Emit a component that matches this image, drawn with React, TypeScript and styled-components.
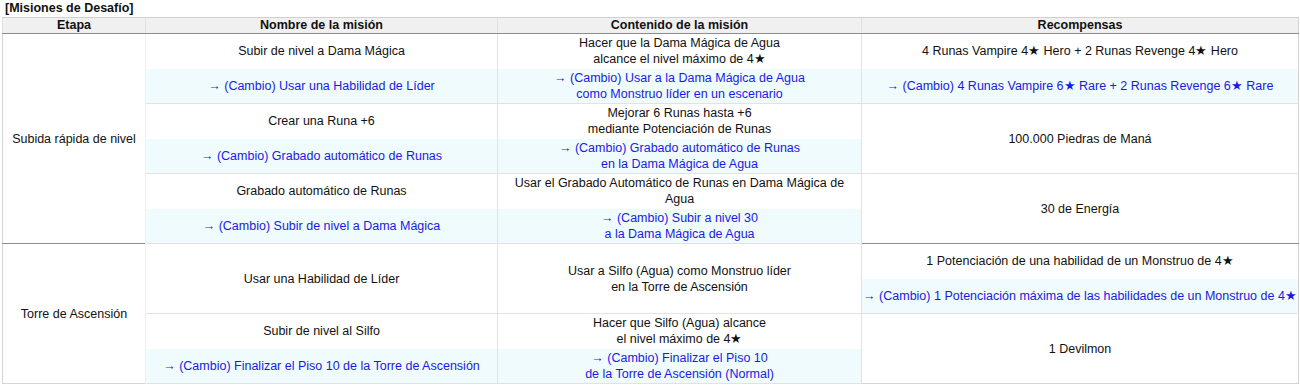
import React from "react";
import styled, { createGlobalStyle } from "styled-components";

const GlobalStyle = createGlobalStyle`
  body {
    margin: 0;
    background: #fff;
    font-family: "Liberation Sans", Arial, sans-serif;
    color: #111;
  }
`;

const Page = styled.div`
  padding: 0 3px 0 2px;
  width: 1300px;
  box-sizing: border-box;
`;

const Title = styled.div`
  font-size: 12.5px;
  font-weight: bold;
  line-height: 17px;
  padding-left: 3px;
`;

const Table = styled.table`
  width: 1296px;
  border-collapse: collapse;
  table-layout: fixed;
  font-size: 12.5px;
  border-left: 1px solid #d4d4d4;
  border-right: 1px solid #d4d4d4;
  border-bottom: 1px solid #d4d4d4;
`;

const Th = styled.th`
  background: #f0f0f0;
  font-weight: bold;
  height: 15px;
  line-height: 15px;
  padding: 0;
  border-top: 1px solid #d0d0d0;
  border-bottom: 1px solid #8c8c8c;
  border-left: 1px solid #e2e2e2;
`;

const Group = styled.tbody<{ $last?: boolean }>`
  border-bottom: ${({ $last }) => ($last ? "1px solid #d4d4d4" : "1px solid #8c8c8c")};
`;

const Cell = styled.td<{ $change?: boolean; $tight?: boolean; $ruled?: boolean }>`
  height: 35px;
  padding: 0 ${({ $tight }) => ($tight ? 0 : 2)}px;
  text-align: center;
  vertical-align: middle;
  line-height: 16px;
  white-space: ${({ $tight }) => ($tight ? "nowrap" : "normal")};
  overflow: hidden;
  color: ${({ $change }) => ($change ? "#1a1ae6" : "#111")};
  background: ${({ $change }) => ($change ? "#f0fbfd" : "#fff")};
  border-left: 1px solid #e2e2e2;
  border-bottom: ${({ $change, $ruled }) => ($change || $ruled ? "1px solid #e2e2e2" : "none")};
  box-sizing: border-box;
`;

const StageCell = styled.td`
  padding: 0 2px;
  text-align: center;
  vertical-align: middle;
  background: #fff;
  border-right: 1px solid #f0f0f0;
`;

const Arrow = "→ (Cambio) ";

export default function App() {
  return (
    <Page>
      <GlobalStyle />
      <Title>[Misiones de Desafío]</Title>
      <Table>
        <colgroup>
          <col style={{ width: 143 }} />
          <col style={{ width: 352 }} />
          <col style={{ width: 364 }} />
          <col style={{ width: 437 }} />
        </colgroup>
        <thead>
          <tr>
            <Th>Etapa</Th>
            <Th>Nombre de la misión</Th>
            <Th>Contenido de la misión</Th>
            <Th>Recompensas</Th>
          </tr>
        </thead>
        <Group>
          <tr>
            <StageCell rowSpan={6}>Subida rápida de nivel</StageCell>
            <Cell>Subir de nivel a Dama Mágica</Cell>
            <Cell>
              Hacer que la Dama Mágica de Agua
              <br />
              alcance el nivel máximo de 4★
            </Cell>
            <Cell>4 Runas Vampire 4★ Hero + 2 Runas Revenge 4★ Hero</Cell>
          </tr>
          <tr>
            <Cell $change>{Arrow}Usar una Habilidad de Líder</Cell>
            <Cell $change>
              {Arrow}Usar a la Dama Mágica de Agua
              <br />
              como Monstruo líder en un escenario
            </Cell>
            <Cell $change>
              {Arrow}4 Runas Vampire 6★ Rare + 2 Runas Revenge 6★ Rare
            </Cell>
          </tr>
          <tr>
            <Cell>Crear una Runa +6</Cell>
            <Cell>
              Mejorar 6 Runas hasta +6
              <br />
              mediante Potenciación de Runas
            </Cell>
            <Cell rowSpan={2} $ruled>100.000 Piedras de Maná</Cell>
          </tr>
          <tr>
            <Cell $change>{Arrow}Grabado automático de Runas</Cell>
            <Cell $change>
              {Arrow}Grabado automático de Runas
              <br />
              en la Dama Mágica de Agua
            </Cell>
          </tr>
          <tr>
            <Cell>Grabado automático de Runas</Cell>
            <Cell>Usar el Grabado Automático de Runas en Dama Mágica de Agua</Cell>
            <Cell rowSpan={2}>30 de Energía</Cell>
          </tr>
          <tr>
            <Cell $change>{Arrow}Subir de nivel a Dama Mágica</Cell>
            <Cell $change>
              {Arrow}Subir a nivel 30
              <br />
              a la Dama Mágica de Agua
            </Cell>
          </tr>
        </Group>
        <Group $last>
          <tr>
            <StageCell rowSpan={4}>Torre de Ascensión</StageCell>
            <Cell rowSpan={2} $ruled>Usar una Habilidad de Líder</Cell>
            <Cell rowSpan={2} $ruled>
              Usar a Silfo (Agua) como Monstruo líder
              <br />
              en la Torre de Ascensión
            </Cell>
            <Cell>1 Potenciación de una habilidad de un Monstruo de 4★</Cell>
          </tr>
          <tr>
            <Cell $change $tight>
              {Arrow}1 Potenciación máxima de las habilidades de un Monstruo de 4★
            </Cell>
          </tr>
          <tr>
            <Cell>Subir de nivel al Silfo</Cell>
            <Cell>
              Hacer que Silfo (Agua) alcance
              <br />
              el nivel máximo de 4★
            </Cell>
            <Cell rowSpan={2}>1 Devilmon</Cell>
          </tr>
          <tr>
            <Cell $change>{Arrow}Finalizar el Piso 10 de la Torre de Ascensión</Cell>
            <Cell $change>
              {Arrow}Finalizar el Piso 10
              <br />
              de la Torre de Ascensión (Normal)
            </Cell>
          </tr>
        </Group>
      </Table>
    </Page>
  );
}
